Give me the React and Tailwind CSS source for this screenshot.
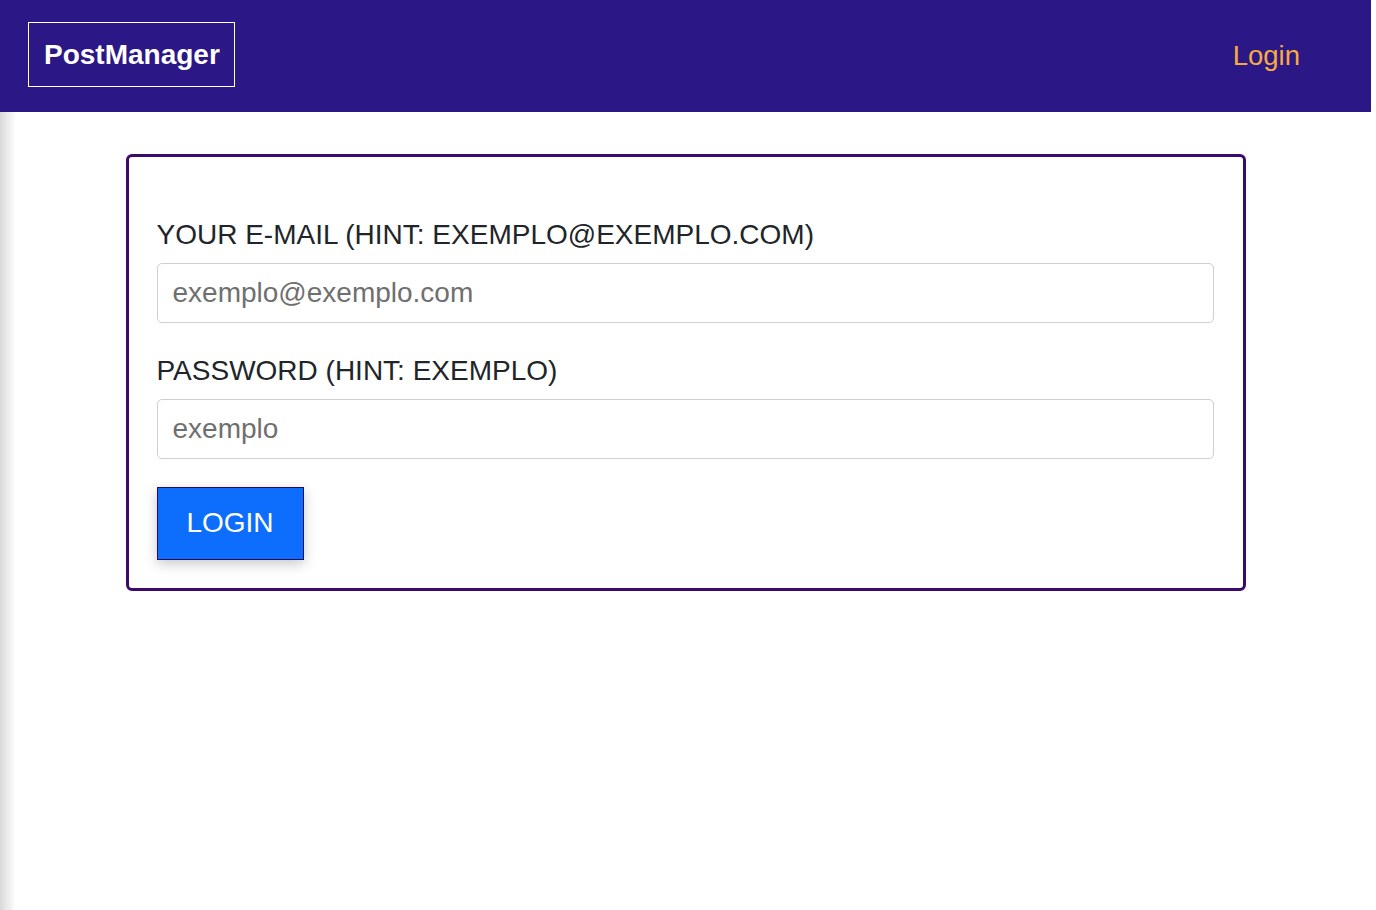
export default function App() {
  const font = { fontFamily: '"Liberation Sans", Arial, sans-serif' };
  return (
    <div className="min-h-[910px] w-full bg-white" style={font}>
      <header className="flex h-[112px] w-[1371px] justify-between bg-[#2b1785] pl-[28px] pr-[71px]">
        <div className="mt-[22px] flex h-[65px] w-[207px] items-center self-start border border-white px-[15px]">
          <span className="text-[28px] font-bold leading-[32px] text-white">PostManager</span>
        </div>
        <a className="self-center text-[27.5px] leading-[32px] text-[#f7aa3f]" href="#">
          Login
        </a>
      </header>
      <main className="min-h-[798px] w-[1371px] bg-[linear-gradient(to_right,#d9d9d9,#ffffff_16px)] pt-[42px]">
        <div className="mx-auto w-[1120px] rounded-[6px] border-[3px] border-[#3b0a6b] bg-white pb-[28px] pl-[28px] pr-[29px] pt-[62px]">
          <label className="block text-[28px] leading-[32px] text-[#212529]">
            YOUR E-MAIL (HINT: EXEMPLO@EXEMPLO.COM)
          </label>
          <input
            className="mt-[12px] block h-[60px] w-full rounded-[5px] border border-[#cfcfcf] px-[15px] pb-[1px] text-[28px] leading-[32px] text-[#212529] placeholder:text-[#6f6f6f] outline-none"
            placeholder="exemplo@exemplo.com"
            style={font}
          />
          <label className="mt-[32px] block text-[28px] leading-[32px] text-[#212529]">
            PASSWORD (HINT: EXEMPLO)
          </label>
          <input
            type="password"
            className="mt-[12px] block h-[60px] w-full rounded-[5px] border border-[#cfcfcf] px-[15px] text-[28px] leading-[32px] text-[#212529] placeholder:text-[#6f6f6f] outline-none"
            placeholder="exemplo"
            style={font}
          />
          <button
            className="mt-[28px] flex h-[73px] w-[147px] items-center justify-center border border-[#2a0a5e] bg-[#0d6efd] pb-[2px] text-[28px] leading-[32px] text-white shadow-[0_4px_12px_rgba(0,0,0,0.22)]"
            style={font}
          >
            LOGIN
          </button>
        </div>
      </main>
    </div>
  );
}
